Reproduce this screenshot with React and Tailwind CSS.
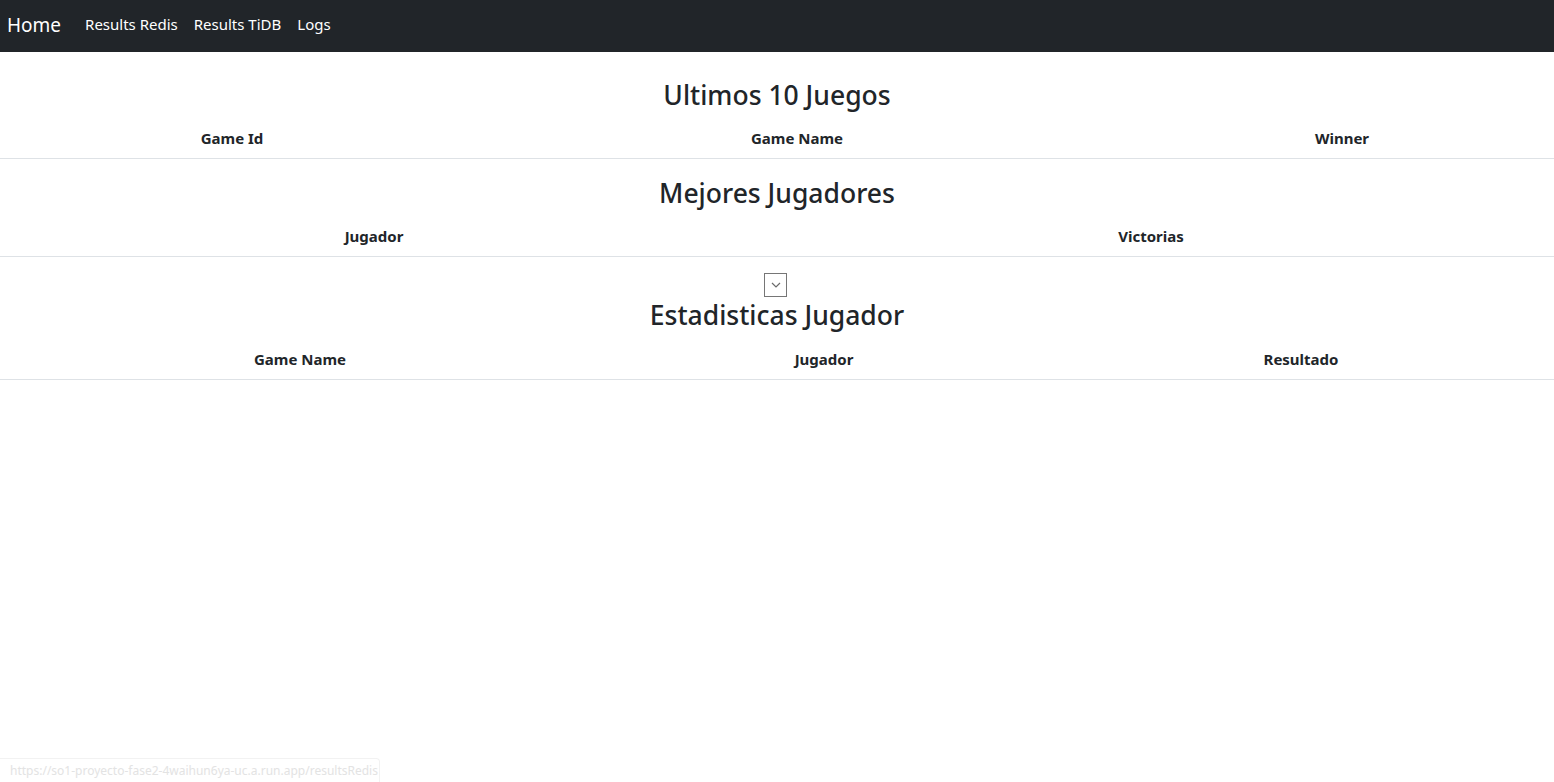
import React from 'react';

const font = { fontFamily: '"Noto Sans", "Open Sans", sans-serif' };

const Table = ({ cols, template }) => (
    <div className={`grid ${template} border-b border-[#dee2e6]`}>
        {cols.map((c) => (
            <div key={c} className="px-2 py-2 text-center text-[15px] leading-6 font-bold text-[#212529]">
                {c}
            </div>
        ))}
    </div>
);

const App = () => {
    return (
        <div className="min-h-[782px] bg-white relative" style={font}>
            <nav className="h-[52px] bg-[#212529] flex items-center pl-[7px] pb-[3px]">
                <a className="text-white text-[19px] leading-[30px] mr-4">Home</a>
                <div className="flex items-center">
                    <a className="text-white text-[15px] px-2">Results Redis</a>
                    <a className="text-white text-[15px] px-2">Results TiDB</a>
                    <a className="text-white text-[15px] px-2">Logs</a>
                </div>
            </nav>

            <div className="pt-[27px]">
                <h3 className="text-center text-[26.5px] leading-[33px] font-medium text-[#212529] mb-[6px]">Ultimos 10 Juegos</h3>
                <Table cols={['Game Id', 'Game Name', 'Winner']} template="grid-cols-[464px_666px_1fr]" />

                <h3 className="text-center text-[26.5px] leading-[33px] font-medium text-[#212529] mt-[18px] mb-[6px]">Mejores Jugadores</h3>
                <Table cols={['Jugador', 'Victorias']} template="grid-cols-[748px_1fr]" />

                <div className="flex justify-center mt-4 pr-[3px]">
                    <div className="w-[23px] h-[24px] border border-[#767676] flex items-center justify-center bg-white">
                        <svg width="10" height="6" viewBox="0 0 10 6" fill="none">
                            <path d="M1 1l4 4 4-4" stroke="#6b6b6b" strokeWidth="1.2" />
                        </svg>
                    </div>
                </div>
                <h3 className="text-center text-[26.5px] leading-[33px] font-medium text-[#212529] mt-[2px] mb-[7px]">Estadisticas Jugador</h3>
                <Table cols={['Game Name', 'Jugador', 'Resultado']} template="grid-cols-[600px_448px_1fr]" />
            </div>

            <div className="absolute left-0 bottom-0 w-[380px] h-[24px] border-t border-r border-[#f2f2f2] bg-white rounded-tr px-[10px] text-[12px] leading-[24px] text-[#e3e3e3] whitespace-nowrap">
                https://so1-proyecto-fase2-4waihun6ya-uc.a.run.app/resultsRedis
            </div>
        </div>
    );
};

export default App;
